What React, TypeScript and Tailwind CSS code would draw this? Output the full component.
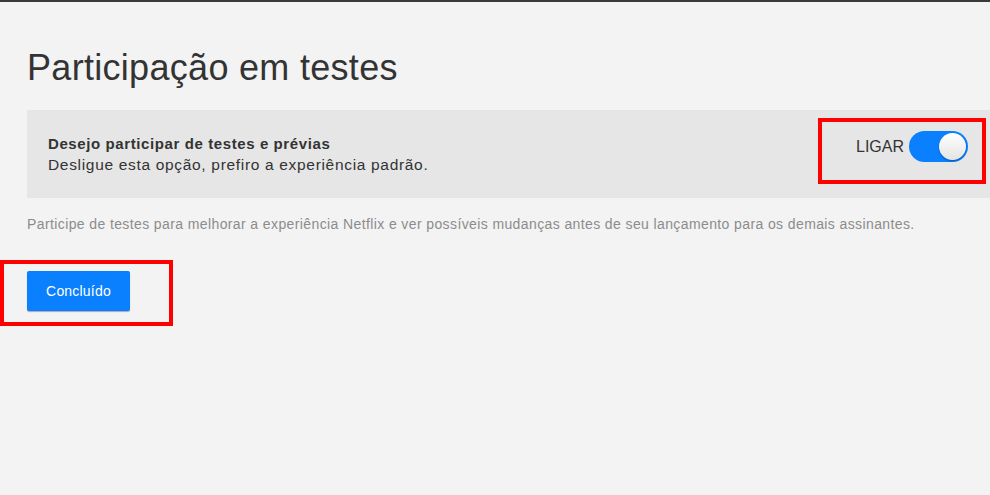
import React from "react";

export default function App() {
  return (
    <div
      className="relative h-[495px] w-[990px] overflow-hidden border-t-2 border-[#3a3a3a] bg-[#f3f3f3] text-[#333]"
      style={{ fontFamily: '"Liberation Sans", Arial, sans-serif' }}
    >
      <div className="pl-[27px]">
        <h1 className="pt-[46px] text-[36px] leading-[40px] font-normal tracking-[0.3px] text-[#333]">
          Participação em testes
        </h1>

        <div className="relative mt-[22px] flex h-[88px] items-center justify-between bg-[#e6e6e6] pl-[21px]">
          <div className="flex flex-col">
            <div className="text-[15px] leading-[21px] font-bold tracking-[0.6px] text-[#333]">
              Desejo participar de testes e prévias
            </div>
            <div className="text-[15.5px] leading-[21px] tracking-[0.68px] text-[#333]">
              Desligue esta opção, prefiro a experiência padrão.
            </div>
          </div>

          <div className="mr-[22px] flex items-center gap-[5px] self-start pt-[21px]">
            <span className="text-[16px] leading-[20px] text-[#333]">LIGAR</span>
            <div className="flex h-[31px] w-[59px] items-center justify-end rounded-full bg-[#0a80ff] pr-[2px]">
              <div className="h-[27px] w-[27px] rounded-full bg-gradient-to-b from-white to-[#e4e4e4] shadow-[0_1px_2px_rgba(0,0,0,0.35)]" />
            </div>
          </div>

          <div className="pointer-events-none absolute left-[791px] top-[8px] h-[66px] w-[168px] border-[4px] border-[#ff0000]" />
        </div>

        <p className="mt-[16px] text-[14px] leading-[20px] tracking-[0.39px] text-[#8c8c8c]">
          Participe de testes para melhorar a experiência Netflix e ver possíveis mudanças antes de seu lançamento para os demais assinantes.
        </p>

        <div className="relative mt-[37px]">
          <button className="h-[40px] w-[103px] rounded-[2px] bg-[#0a80ff] text-[14px] tracking-[0.2px] text-white shadow-[0_1px_1px_rgba(0,0,0,0.3)]">
            Concluído
          </button>
          <div className="pointer-events-none absolute left-[-27px] top-[-11px] h-[66px] w-[173px] border-[4px] border-[#ff0000]" />
        </div>
      </div>
    </div>
  );
}
